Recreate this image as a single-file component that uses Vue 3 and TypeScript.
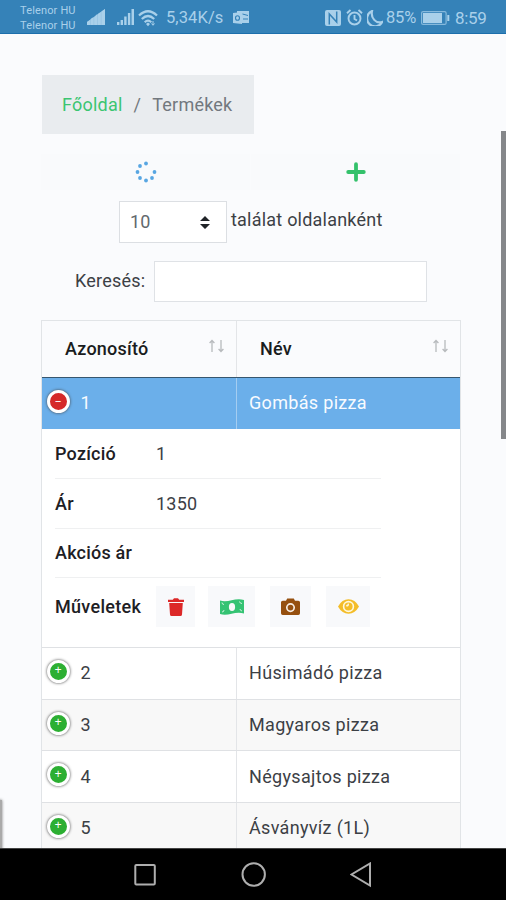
<script setup lang="ts">
interface Product {
  id: number
  name: string
}

const first: Product = { id: 1, name: 'Gombás pizza' }
const products: Product[] = [
  { id: 2, name: 'Húsimádó pizza' },
  { id: 3, name: 'Magyaros pizza' },
  { id: 4, name: 'Négysajtos pizza' },
  { id: 5, name: 'Ásványvíz (1L)' },
]
const details: { label: string; value: string }[] = [
  { label: 'Pozíció', value: '1' },
  { label: 'Ár', value: '1350' },
  { label: 'Akciós ár', value: '' },
]
</script>

<template>
  <div class="phone">
    <header class="status">
      <div class="carriers"><span>Telenor HU</span><span>Telenor HU</span></div>
      <svg class="signal" width="18" height="16" viewBox="0 0 18 16"><path opacity=".8" d="M0 16v-3L18 0v16z" /><path d="M0 16v-3l3-2v5zM3.6 16v-6l3-2v8zM7.2 16V8l3-3v11zM10.8 16V5l3-2v13zM14.4 16V2.600L18 0v16z" /></svg>
      <svg class="bars" width="17" height="16" viewBox="0 0 17 16"><path d="M0 13h2.400v3H0zM3.600 11H6v5H3.600zM7.200 7.500h2.400V16H7.200zM10.900 4h2.400v12h-2.400zM14.500 0H17v16h-2.500z" /></svg>
      <svg class="wifi" width="20" height="18" viewBox="0 0 20 18" fill="none"><path d="M1 6.500Q10-2 19 6.500M3.800 10Q10 4 16.200 10M6.700 13.200Q10 10.200 13.300 13.200" stroke="#a9d0ea" stroke-width="2.200" /><path d="M8 15l2-1.500 2 1.500-2 2.300z" fill="#a9d0ea" /><path d="M15 12v4m-1.500-1.500L15 16.300l1.500-1.800" stroke="#a9d0ea" /></svg>
      <span class="speed">5,34K/s</span>
      <svg class="mail" width="16" height="14" viewBox="0 0 16 14"><path d="M4 0h12v12H4z" /><path d="M0 2l9-1v12l-9-1z" /><path d="M9.500 3L15 4.500M10 8h5" stroke="#3582b8" fill="none" /><ellipse cx="4.500" cy="7" rx="2" ry="2.300" fill="none" stroke="#3582b8" stroke-width="1.100" /></svg>
      <div class="fill" />
      <svg width="16" height="16" viewBox="0 0 16 16"><rect width="16" height="16" rx="2" /><path d="M4.300 14.500V4l7.400 8V1.500" stroke="#3582b8" stroke-width="1.500" fill="none" /></svg>
      <svg class="alarm" width="17" height="17" viewBox="0 0 17 17" fill="none" stroke="#a9d0ea" stroke-width="1.900"><circle cx="8.500" cy="9.500" r="6" /><path d="M8.500 6v4l2.500 1.500M1 4.200L4.500 1M12.500 1L16 4.200" /></svg>
      <svg class="moon" width="16" height="16" viewBox="0 0 16 16"><path d="M5 1A8 8 0 1 0 15.200 12C9 14 3.500 8 5 1z" fill="none" stroke="#a9d0ea" stroke-width="2.200" /></svg>
      <span class="percent">85%</span>
      <svg class="battery" width="29" height="14" viewBox="0 0 29 14"><rect x=".6" y=".6" width="24.500" height="12.800" rx="1.500" fill="none" stroke="#86b9dc" stroke-width="1.200" /><path d="M2 2h19v10H2zM26.300 4h2v6h-2z" /></svg>
      <span class="clock">8:59</span>
    </header>

    <main class="page">
      <nav class="breadcrumb"><a>Főoldal</a><span class="slash">/</span><span>Termékek</span></nav>

      <div class="tools">
        <button type="button" aria-label="Frissítés">
          <svg width="22" height="22" viewBox="0 0 22 22" fill="#58a6e2"><circle cx="11" cy="2.500" r="1.900" /><circle cx="5" cy="5" r="1.900" /><circle cx="2.500" cy="11" r="1.900" /><circle cx="5" cy="17" r="1.900" /><circle cx="11" cy="19.500" r="1.900" /><circle cx="17" cy="17" r="1.900" /><circle cx="19.500" cy="11" r="1.900" /></svg>
        </button>
        <button type="button" aria-label="Új">
          <svg width="20" height="20" viewBox="0 0 20 20"><path d="M10 2.200v15.600M2.200 10h15.600" stroke="#34c16b" stroke-width="3.800" stroke-linecap="round" /></svg>
        </button>
      </div>

      <div class="length">
        <div class="select"><span>10</span><svg width="10" height="13" viewBox="0 0 10 13"><path d="M0 5L5 0l5 5zM0 8h10l-5 5z" fill="#202428" /></svg></div>
        <span class="per-page">találat oldalanként</span>
      </div>

      <div class="search"><span class="search-label">Keresés:</span><div class="input" /></div>

      <section class="table">
        <div class="row head">
          <div class="cell"><span class="title-id">Azonosító</span><svg width="17" height="14" viewBox="0 0 17 14" class="sort"><path d="M4 13V1.500M1.600 4L4 1.500 6.400 4M13 1v11.500M10.600 10l2.400 2.500 2.400-2.500" /></svg></div>
          <div class="cell"><span class="title-name">Név</span><svg width="17" height="14" viewBox="0 0 17 14" class="sort"><path d="M4 13V1.500M1.600 4L4 1.500 6.400 4M13 1v11.500M10.600 10l2.400 2.500 2.400-2.500" /></svg></div>
        </div>
        <div class="row selected">
          <div class="cell"><i class="toggle minus" /><span>{{ first.id }}</span></div>
          <div class="cell"><span>{{ first.name }}</span></div>
        </div>
        <div class="child">
          <div v-for="d in details" :key="d.label" class="detail"><b>{{ d.label }}</b><span>{{ d.value }}</span></div>
          <div class="detail actions">
            <b>Műveletek</b>
            <button type="button" class="trash"><svg width="16" height="18" viewBox="0 0 16 18" fill="#dc2828"><path d="M0 1.800h4.800L6 .3h4l1.200 1.500H16V4H0zM1.200 5h13.600L14 16.500q-.1 1.500-1.600 1.500H3.600Q2.100 18 2 16.500z" /></svg></button>
            <button type="button" class="money"><svg width="24" height="18" viewBox="0 0 24 18"><path d="M0 2.500C8 5.500 15-1 24 2v13.500c-9-3-16 3.500-24 .5z" fill="#35c373" /><ellipse cx="12" cy="9" rx="3.100" ry="4" fill="#f8f9fa" /><path d="M2 4.500q0 2 2 2M22 13q-2-.5-2-2M2 14q2 0 2-2M19.500 3.500q.3 2 2.500 2" stroke="#c9efd9" fill="none" /></svg></button>
            <button type="button" class="camera"><svg width="19" height="17" viewBox="0 0 19 17"><path d="M1.700 2.700H5L6.200.5h6.600L14 2.700h3.300Q19 2.700 19 4.300v11Q19 17 17.300 17H1.700Q0 17 0 15.300v-11q0-1.600 1.700-1.600z" fill="#96500f" /><circle cx="9.500" cy="9.600" r="3.700" fill="none" stroke="#f8eee4" stroke-width="1.700" /></svg></button>
            <button type="button" class="eye"><svg width="21" height="15" viewBox="0 0 21 15"><path d="M0 7.500Q4 .3 10.500.3T21 7.500Q17 14.700 10.500 14.700T0 7.500z" fill="#f4bd29" /><circle cx="10.500" cy="7.500" r="4.900" fill="none" stroke="#fff8dd" stroke-width="1.600" /><path d="M8.200 6.600q2.400.6 2-2" stroke="#fff8dd" stroke-width="1.500" fill="none" /></svg></button>
          </div>
        </div>
        <div v-for="p in products" :key="p.id" class="row item">
          <div class="cell"><i class="toggle" /><span>{{ p.id }}</span></div>
          <div class="cell"><span>{{ p.name }}</span></div>
        </div>
      </section>

      <div class="scrollbar" />
      <div class="edge" />
    </main>

    <footer class="nav">
      <svg width="24" height="24" viewBox="0 0 24 24"><rect x="2.300" y="2" width="19.500" height="19.500" rx="1" /></svg>
      <svg width="26" height="26" viewBox="0 0 26 26"><circle cx="12.700" cy="12.500" r="11.200" /></svg>
      <svg width="24" height="26" viewBox="0 0 24 26"><path d="M20 1.500v22L1.500 12.500z" /></svg>
    </footer>
  </div>
</template>

<style>
body { background: #fafbfd; overflow: hidden; }
</style>

<style scoped>
.phone { width: 506px; height: 900px; display: flex; flex-direction: column; font: 18px/26px Roboto, sans-serif; letter-spacing: .22px; color: #3c4045; background: #fafbfd; overflow: hidden; }
.phone * { box-sizing: border-box; }
svg { display: block; flex: none; }
span, b, a { white-space: nowrap; }
button { border: 0; padding: 0; background: #f8f9fb; display: flex; align-items: center; justify-content: center; }

.status { height: 34px; flex: none; display: flex; align-items: center; padding: 2px 18px 0 20px; background: #3582b8; border-bottom: 1px solid #1c6fac; color: #a9d0ea; }
.status svg { fill: #a9d0ea; }
.status svg.wifi, .status svg.alarm { fill: none; }
.carriers { width: 67px; display: flex; flex-direction: column; font-size: 11px; line-height: 15.500px; letter-spacing: .15px; padding-top: 1px; }
.signal { margin-top: -1px; }
.bars { margin-left: 12px; margin-top: -1px; }
.wifi { margin-left: 4px; }
.speed { margin-left: 8px; width: 57px; font-size: 16.500px; letter-spacing: .1px; }
.mail { margin-left: 10px; }
.fill { flex: 1; }
.alarm { margin-left: 5px; }
.moon { margin-left: 4px; }
.percent { margin-left: 3px; width: 30px; font-size: 16.500px; letter-spacing: -.2px; }
.battery { margin-left: 5px; }
.clock { margin-left: 5px; width: 33px; font-size: 17px; letter-spacing: -.3px; }

.page { flex: 1; min-height: 0; position: relative; overflow: hidden; padding: 41px 45px 0 41px; }
.breadcrumb { width: 212px; height: 59px; margin-left: 1px; padding-left: 20px; display: flex; align-items: center; background: #e9ecef; color: #72787e; }
.breadcrumb a { color: #3bc572; }
.slash { margin: 0 11px; }
.tools { margin: 20px 0 0; display: flex; gap: 1px; }
.tools button { width: 209px; height: 36px; background: #f9fafc; }
.length { margin: 11px 0 0 78px; display: flex; }
.select { width: 108px; height: 42px; border: 1px solid #dcdfe3; background: #fff; padding: 0 16px 0 10px; display: flex; align-items: center; justify-content: space-between; color: #62686d; }
.per-page { margin: 6px 0 0 4px; }
.search { margin: 18px 0 0 34px; display: flex; }
.search-label { width: 79px; padding-top: 7px; }
.input { width: 273px; height: 41px; border: 1px solid #dfe2e6; background: #fff; }

.table { width: 420px; margin-top: 18px; border: 1px solid #e1e4e7; border-bottom: 0; }
.row { display: grid; grid-template-columns: 195px 1fr; }
.cell { display: flex; align-items: center; padding-left: 12px; letter-spacing: .32px; }
.cell:first-child { padding-left: 4.500px; border-right: 1px solid #e3e5e8; }
.head { height: 57px; color: #191c20; font-weight: 500; border-bottom: 1px solid #36566f; }
.head .cell { padding: 0 11px 0 23px; justify-content: space-between; letter-spacing: .22px; }
.sort { fill: none; stroke: #b7babd; stroke-width: 1.300; margin-top: -6px; }
.selected { height: 51px; background: #6bafea; color: #f8fbff; }
.selected span { margin-top: -1px; }
.selected .cell:first-child { border-color: #a4cdf1; }
.toggle { width: 23px; height: 23px; flex: none; border: 3px solid #fff; border-radius: 50%; background: #2caf32; box-shadow: 0 0 3px #444; margin: -4px 11px 0 0; display: flex; align-items: center; justify-content: center; }
.toggle::before { content: '+'; font: 12px/12px "Liberation Mono", monospace; letter-spacing: 0; color: #fff; }
.toggle.minus { background: #d52929; }
.toggle.minus::before { content: '–'; }
.child { height: 218px; padding: 1px 0 0 13px; background: #fff; }
.detail { width: 326px; height: 49.400px; display: flex; align-items: center; border-bottom: 1px solid #eff0f1; }
.detail b { width: 101px; flex: none; font-weight: 500; color: #1d2024; }
.actions { height: 57px; border: 0; }
.actions b { letter-spacing: .3px; }
.actions button { height: 41px; flex: none; }
.trash { width: 39px; }
.money { width: 47px; margin-left: 13px; }
.camera { width: 41px; margin-left: 15px; }
.eye { width: 44px; margin-left: 15px; }
.item { height: 51.700px; border-top: 1px solid #dfe1e4; background: #fff; }
.item:nth-child(odd) { background: #f8f8f8; }

.scrollbar { position: absolute; right: 0; top: 97px; width: 5px; height: 308px; background: #85878a; }
.edge { position: absolute; left: -5px; top: 766px; width: 7px; height: 52px; background: #aaa; box-shadow: 0 0 3px #777; }

.nav { height: 52px; flex: none; display: flex; align-items: center; padding-left: 133px; background: #000; border-top: 1px solid #444; }
.nav svg { fill: none; stroke: #aeaeae; stroke-width: 2; }
.nav svg + svg { margin-left: 83.500px; }
</style>
